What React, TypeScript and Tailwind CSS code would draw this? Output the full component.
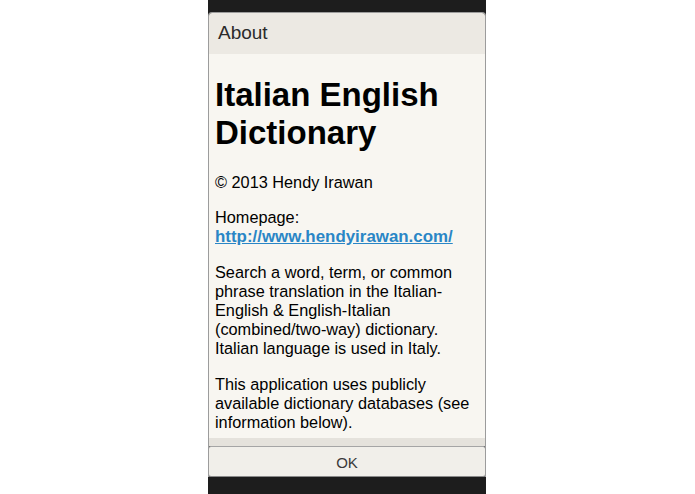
export default function App() {
  return (
    <div className="w-full h-[494px] bg-white flex pl-[208px]" style={{ fontFamily: '"Liberation Sans", Arial, sans-serif' }}>
      <div className="w-[278px] h-[494px] bg-[#1d1d1d] flex flex-col pt-[12px] pb-[17px]">
        <div className="flex-1 flex flex-col min-h-0 border-x border-t border-[#9c9c9c] rounded-t-[4px] overflow-hidden">
          <div className="h-[41px] shrink-0 bg-[#ece9e3] flex items-center pl-[9px] text-[19px] text-[#2b2b2b]">
            About
          </div>
          <div className="flex-1 min-h-0 overflow-hidden bg-[#f8f6f1] px-[6px] pt-[22px] text-[16.3px] leading-[19px] text-black">
            <h1 className="text-[33px] leading-[38px] font-bold mb-[21px]">Italian English Dictionary</h1>
            <p className="mb-[16px]">© 2013 Hendy Irawan</p>
            <p className="mb-[17px]">
              Homepage:
              <br />
              <a href="#" className="font-bold text-[16.9px] text-[#2a86c6] underline">http://www.hendyirawan.com/</a>
            </p>
            <p className="mb-[17px]">
              Search a word, term, or common phrase translation in the Italian-English &amp; English-Italian (combined/two-way) dictionary. Italian language is used in Italy.
            </p>
            <p className="mb-[17px]">
              This application uses publicly available dictionary databases (see information below).
            </p>
          </div>
          <div className="h-[8px] shrink-0 bg-[#e5e2dc]" />
          <button className="h-[31px] shrink-0 bg-[#f1efea] border border-[#a5a5a5] border-b-[#8a8a8a] rounded-[3px] -mx-px pt-[3px] text-[15px] text-[#3a3a3a]">
            OK
          </button>
        </div>
      </div>
    </div>
  );
}
